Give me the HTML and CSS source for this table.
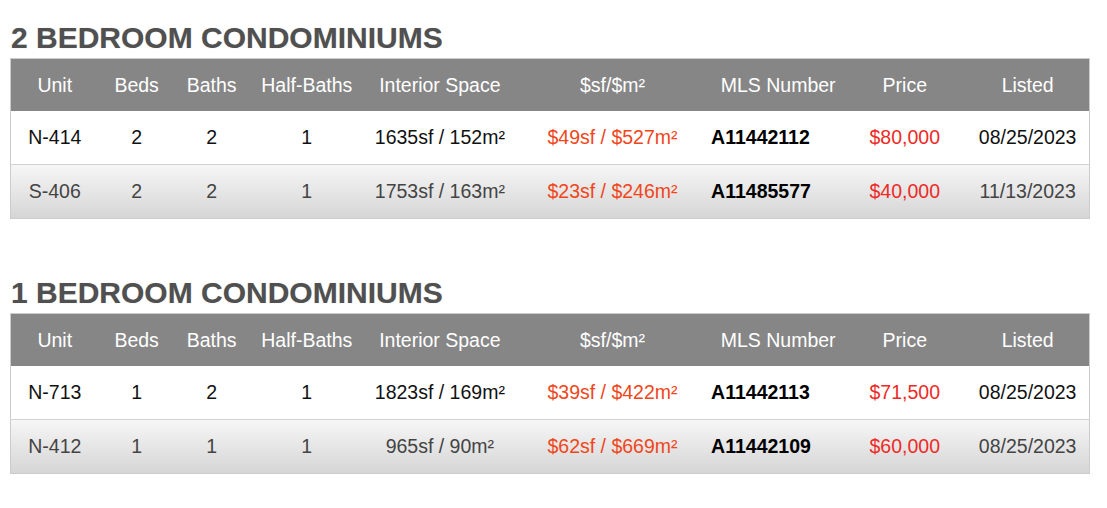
FILE: index.html
```html
<!DOCTYPE html>
<html lang="en">
<head>
<meta charset="utf-8">
<title>Condominiums</title>
<link rel="stylesheet" href="styles.css">
</head>
<body>
<main class="page">
  <section class="group">
    <h2 class="group-title">2 BEDROOM CONDOMINIUMS</h2>
    <table class="units">
      <colgroup>
        <col class="c-unit"><col class="c-beds"><col class="c-baths"><col class="c-half"><col class="c-int"><col class="c-psf"><col class="c-mls"><col class="c-price"><col class="c-listed">
      </colgroup>
      <thead>
        <tr><th>Unit</th><th>Beds</th><th>Baths</th><th>Half-Baths</th><th>Interior Space</th><th>$sf/$m²</th><th>MLS Number</th><th>Price</th><th class="listed">Listed</th></tr>
      </thead>
      <tbody>
        <tr class="odd"><td>N-414</td><td>2</td><td>2</td><td>1</td><td>1635sf / 152m²</td><td class="psf">$49sf / $527m²</td><td class="mls">A11442112</td><td class="price">$80,000</td><td class="listed">08/25/2023</td></tr>
        <tr class="even"><td>S-406</td><td>2</td><td>2</td><td>1</td><td>1753sf / 163m²</td><td class="psf">$23sf / $246m²</td><td class="mls">A11485577</td><td class="price">$40,000</td><td class="listed">11/13/2023</td></tr>
      </tbody>
    </table>
  </section>
  <section class="group group-next">
    <h2 class="group-title">1 BEDROOM CONDOMINIUMS</h2>
    <table class="units">
      <colgroup>
        <col class="c-unit"><col class="c-beds"><col class="c-baths"><col class="c-half"><col class="c-int"><col class="c-psf"><col class="c-mls"><col class="c-price"><col class="c-listed">
      </colgroup>
      <thead>
        <tr><th>Unit</th><th>Beds</th><th>Baths</th><th>Half-Baths</th><th>Interior Space</th><th>$sf/$m²</th><th>MLS Number</th><th>Price</th><th class="listed">Listed</th></tr>
      </thead>
      <tbody>
        <tr class="odd"><td>N-713</td><td>1</td><td>2</td><td>1</td><td>1823sf / 169m²</td><td class="psf">$39sf / $422m²</td><td class="mls">A11442113</td><td class="price">$71,500</td><td class="listed">08/25/2023</td></tr>
        <tr class="even"><td>N-412</td><td>1</td><td>1</td><td>1</td><td>965sf / 90m²</td><td class="psf">$62sf / $669m²</td><td class="mls">A11442109</td><td class="price">$60,000</td><td class="listed">08/25/2023</td></tr>
      </tbody>
    </table>
  </section>
</main>
</body>
</html>
```
FILE: styles.css
```css
html, body {
  margin: 0;
  padding: 0;
  background: #ffffff;
}

body {
  font-family: "Liberation Sans", Arial, sans-serif;
}

.page {
  padding: 21px 17px 0 10px;
}

.group-title {
  margin: 0 0 3px 1px;
  font-size: 30px;
  line-height: 34px;
  font-weight: bold;
  color: #505050;
  text-shadow: 0 0 1px rgba(0, 0, 0, 0.25);
}

.group-next {
  margin-top: 57px;
}

.units {
  width: 1080px;
  border-collapse: collapse;
  table-layout: fixed;
  border: 1px solid #cccccc;
  font-size: 19.5px;
}

.c-unit { width: 88px; }
.c-beds { width: 76px; }
.c-baths { width: 74px; }
.c-half { width: 116px; }
.c-int { width: 150px; }
.c-psf { width: 195px; }
.c-mls { width: 136px; }
.c-price { width: 117px; }
.c-listed { width: 126px; }

.units th {
  height: 52px;
  padding: 0;
  background: #868686;
  color: #ffffff;
  font-weight: normal;
  text-align: center;
  vertical-align: middle;
  white-space: nowrap;
}

.units td {
  height: 53px;
  padding: 0;
  text-align: center;
  vertical-align: middle;
  white-space: nowrap;
  color: #111111;
}

.units tr.odd td {
  background: #ffffff;
}

.units tr.even td {
  height: 53px;
  border-top: 1px solid #d2d2d2;
  color: #444444;
}

.units tr.even {
  background: linear-gradient(to bottom, #f6f6f6 0%, #d5d5d5 100%);
}

.units .psf {
  color: #f0461a !important;
}

.units .price {
  color: #ee2a26 !important;
}

.units .mls {
  text-align: left;
  padding-left: 1px;
  font-weight: bold;
  color: #000000 !important;
}

.units .listed {
  padding-left: 3px;
}
```
